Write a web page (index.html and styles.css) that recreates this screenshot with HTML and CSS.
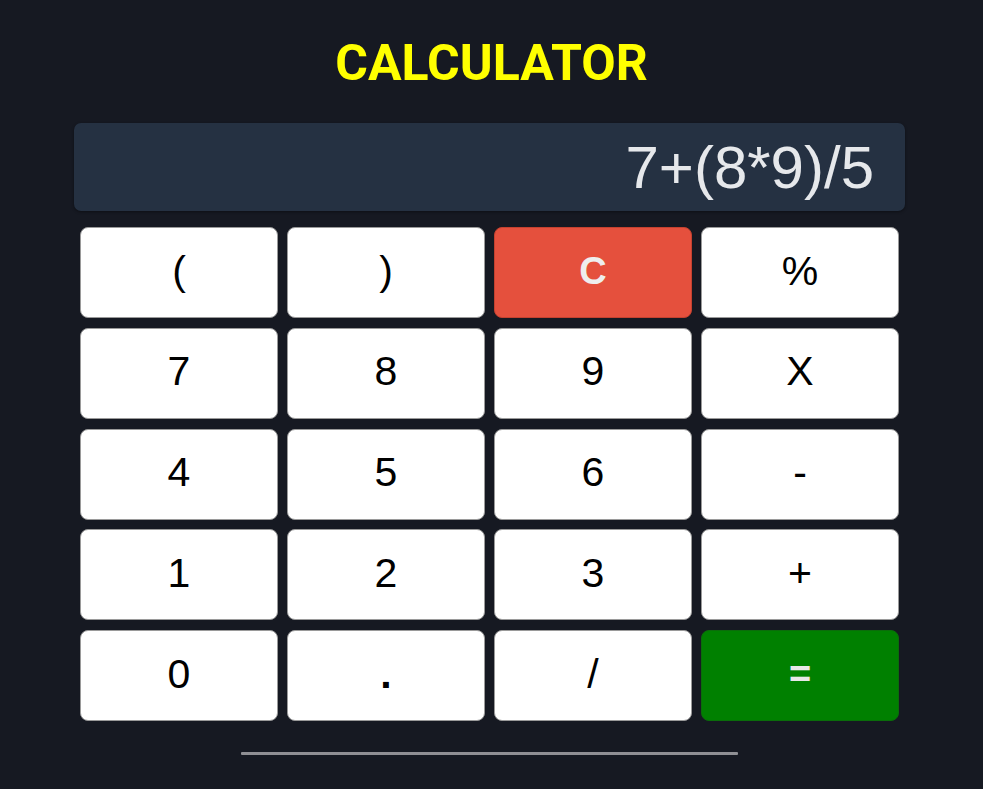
FILE: index.html
```html
<!DOCTYPE html>
<html lang="en">
<head>
<meta charset="utf-8">
<title>Calculator</title>
<link rel="stylesheet" href="styles.css">
</head>
<body>
<main class="calc">
  <h1 class="title">CALCULATOR</h1>
  <div class="display">7+(8*9)/5</div>
  <div class="keys">
    <button class="key">(</button>
    <button class="key">)</button>
    <button class="key key-clear">C</button>
    <button class="key">%</button>
    <button class="key">7</button>
    <button class="key">8</button>
    <button class="key">9</button>
    <button class="key">X</button>
    <button class="key">4</button>
    <button class="key">5</button>
    <button class="key">6</button>
    <button class="key">-</button>
    <button class="key">1</button>
    <button class="key">2</button>
    <button class="key">3</button>
    <button class="key">+</button>
    <button class="key">0</button>
    <button class="key key-dot">.</button>
    <button class="key">/</button>
    <button class="key key-equals">=</button>
  </div>
  <div class="indicator"></div>
</main>
</body>
</html>
```

FILE: styles.css
```css
html, body {
  margin: 0;
  padding: 0;
  background: #161922;
  height: 100%;
}

body {
  padding-right: 4px;
}

.calc {
  width: 831px;
  margin: 0 auto;
  padding-top: 34px;
  display: flex;
  flex-direction: column;
  align-items: stretch;
}

.title {
  margin: 0;
  text-align: center;
  font-family: Roboto, "Liberation Sans", sans-serif;
  font-weight: 700;
  font-size: 50px;
  line-height: 58px;
  color: #ffff00;
  padding-left: 4px;
}

.display {
  margin-top: 31px;
  height: 88px;
  box-sizing: border-box;
  background: #253142;
  border-radius: 7px;
  padding-right: 31px;
  display: flex;
  align-items: center;
  justify-content: flex-end;
  font-family: "Liberation Sans", Arial, sans-serif;
  font-size: 60px;
  color: #e6e8eb;
  box-shadow: 0 1px 3px rgba(0,0,0,0.4);
}

.keys {
  margin-top: 16px;
  padding: 0 6px 0 6px;
  display: grid;
  grid-template-columns: repeat(4, 1fr);
  grid-auto-rows: 91px;
  column-gap: 9px;
  row-gap: 9.75px;
}

.key {
  border: 1px solid #9a9a9a;
  border-radius: 8px;
  background: #ffffff;
  color: #000000;
  font-family: "Liberation Sans", Arial, sans-serif;
  font-size: 41px;
  padding: 0 0 3px;
  cursor: pointer;
}

.key-dot {
  font-weight: 700;
}

.key-clear {
  background: #e5503d;
  border-color: #c4412f;
  color: #eeeeee;
  font-weight: 700;
  font-size: 38px;
}

.key-equals {
  background: #008000;
  border-color: #0a6d0a;
  color: #e8e8e8;
  font-weight: 700;
  font-size: 38px;
}

.indicator {
  align-self: center;
  width: 497px;
  height: 3px;
  margin-top: 31px;
  background: #8f8f94;
  border-radius: 1px;
}
```
